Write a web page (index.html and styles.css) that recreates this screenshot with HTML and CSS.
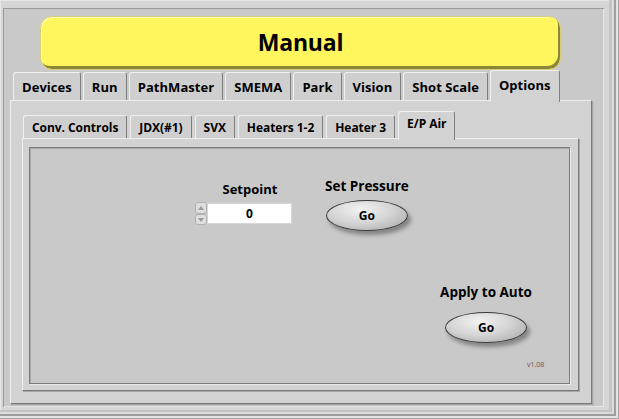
FILE: index.html
```html
<!DOCTYPE html>
<html>
<head>
<meta charset="utf-8">
<link rel="stylesheet" href="styles.css">
</head>
<body>
<div class="win">
  <div class="client">
    <div class="banner">Manual</div>
    <div class="tabs otabs">
      <div class="tab">Devices</div>
      <div class="tab">Run</div>
      <div class="tab">PathMaster</div>
      <div class="tab">SMEMA</div>
      <div class="tab">Park</div>
      <div class="tab">Vision</div>
      <div class="tab">Shot Scale</div>
      <div class="tab sel">Options</div>
    </div>
    <div class="opanel">
      <div class="tabs itabs">
        <div class="tab">Conv. Controls</div>
        <div class="tab">JDX(#1)</div>
        <div class="tab">SVX</div>
        <div class="tab">Heaters 1-2</div>
        <div class="tab">Heater 3</div>
        <div class="tab sel">E/P Air</div>
      </div>
      <div class="ipanel">
        <div class="frame">
          <div class="row1">
            <div class="setpoint">
              <div class="lbl">Setpoint</div>
              <div class="numeric">
                <div class="spin"><span class="up"></span><span class="dn"></span></div>
                <div class="numbox">0</div>
              </div>
            </div>
            <div class="ctl setpress">
              <div class="lbl">Set Pressure</div>
              <div class="gobtn">Go</div>
            </div>
          </div>
          <div class="row2">
            <div class="ctl apply">
              <div class="lbl">Apply to Auto</div>
              <div class="gobtn">Go</div>
            </div>
          </div>
          <div class="ver">v1.08</div>
        </div>
      </div>
    </div>
  </div>
</div>
</body>
</html>
```
FILE: styles.css
```css
* { box-sizing: border-box; }
html, body { margin: 0; padding: 0; }
body {
  width: 619px;
  height: 419px;
  overflow: hidden;
  font-family: "Open Sans", "Noto Sans", sans-serif;
  font-weight: 700;
  color: #000;
}

.win {
  width: 619px;
  height: 419px;
  padding: 8px 15px 12px 3px;
  background: #d6d6d6;
  box-shadow:
    inset -1px -1px 0 #a4a4a4,
    inset -3px -3px 0 #e4e4e4,
    inset -5px -5px 0 #9e9e9e,
    inset -7px -7px 0 #dcdcdc,
    inset -10px -9px 0 #c4c4c4,
    inset 1px 1px 0 #e8e8e8;
}

.client {
  height: 100%;
  background: #c9c9c9;
  box-shadow: inset 1px 1px 0 #9a9a9a, inset -1px -1px 0 #e6e6e6;
  display: flex;
  flex-direction: column;
  align-items: flex-start;
}

.banner {
  margin: 8px 0 0 37px;
  width: 521px;
  height: 54px;
  border-radius: 12px;
  background: #fff55c;
  border: 1px solid #d6cf78;
  box-shadow: inset -2px -3px 0 #8c8738, inset 1px 1px 0 #fffbb8;
  display: flex;
  align-items: center;
  justify-content: center;
  font-size: 23px;
  letter-spacing: -0.2px;
  padding-bottom: 2px;
}

.tabs {
  display: flex;
  align-items: flex-end;
  position: relative;
  z-index: 1;
}

.tab {
  padding: 0 8px;
  background: #cfcfcf;
  border: 1px solid;
  border-color: #f0f0f0 #7e7e7e transparent #f0f0f0;
  border-bottom: none;
  border-radius: 3px 3px 0 0;
  display: flex;
  align-items: center;
  white-space: nowrap;
}

.otabs {
  margin: 0 0 0 10px;
  height: 30px;
  gap: 2px;
}
.otabs .tab { height: 28px; font-size: 13px; letter-spacing: 0.05px; }
.otabs .tab.sel { height: 32px; margin-bottom: -2px; padding-bottom: 4px; background: #d2d2d2; }

.opanel {
  margin-left: 7px;
  width: 582px;
  height: 304px;
  background: #d2d2d2;
  border: 1px solid;
  border-color: #eeeeee #7a7a7a #7a7a7a #eeeeee;
  box-shadow: 1px 1px 0 #a6a6a6, 2px 2px 0 #bdbdbd;
  display: flex;
  flex-direction: column;
  align-items: flex-start;
}

.itabs {
  margin: 12px 0 0 12px;
  height: 25px;
  gap: 3px;
}
.itabs .tab { height: 23px; font-size: 12px; padding: 0 8px; letter-spacing: -0.05px; }
.itabs .tab.sel { height: 29px; margin-bottom: -2px; padding-bottom: 6px; background: #d2d2d2; }

.ipanel {
  margin-left: 11px;
  width: 557px;
  height: 253px;
  background: #d2d2d2;
  border: 1px solid;
  border-color: #eeeeee #7a7a7a #7a7a7a #eeeeee;
  box-shadow: 1px 1px 0 #a6a6a6;
}

.frame {
  margin: 8px 0 0 6px;
  width: 541px;
  height: 237px;
  background: #c9c9c9;
  border: 1px solid #7c7c7c;
  box-shadow: 1px 1px 0 #ececec, inset 1px 1px 0 #a9a9a9;
}

.lbl {
  font-size: 13.5px;
  line-height: 16px;
  white-space: nowrap;
}

.row1 {
  display: flex;
  align-items: flex-start;
  gap: 32px;
  margin: 30px 0 0 165px;
}

.setpoint {
  margin-top: 3px;
  display: flex;
  flex-direction: column;
}
.setpoint .lbl { margin-left: 12px; width: 86px; text-align: center; font-size: 13px; }

.numeric { display: flex; margin-top: 5px; }

.spin {
  width: 12px;
  height: 23px;
  display: flex;
  flex-direction: column;
}
.spin span {
  flex: 1;
  border: 1px solid #b0b0b0;
  background: #dedede;
  border-radius: 3px;
  position: relative;
}
.spin span::after {
  content: "";
  position: absolute;
  left: 2px;
  width: 0;
  height: 0;
  border-left: 3px solid transparent;
  border-right: 3px solid transparent;
}
.spin .up::after { top: 3px; border-bottom: 4px solid #9a9a9a; }
.spin .dn::after { top: 3px; border-top: 4px solid #9a9a9a; }

.numbox {
  width: 85px;
  height: 21px;
  margin-top: 1px;
  background: #fff;
  border: 1px solid #d6d6d6;
  font-size: 12px;
  line-height: 19px;
  text-align: center;
}

.ctl {
  display: flex;
  flex-direction: column;
  align-items: center;
}

.gobtn {
  width: 82px;
  height: 31px;
  border-radius: 50%;
  border: 1px solid #3a3a3a;
  background: radial-gradient(ellipse at 42% 30%, #f2f2f2 0%, #d6d6d6 45%, #a4a4a4 100%);
  box-shadow: 3px 4px 4px rgba(0, 0, 0, 0.35);
  display: flex;
  align-items: center;
  justify-content: center;
  font-size: 12px;
}
.setpress .gobtn { margin-top: 6px; }
.apply .gobtn { margin-top: 12px; }

.row2 {
  display: flex;
  margin: 53px 0 0 409px;
}
.apply { width: 94px; }

.ver {
  margin: 17px 0 0 497px;
  font-size: 7px;
  line-height: 9px;
  font-weight: 400;
  color: #7a4a44;
}
```
